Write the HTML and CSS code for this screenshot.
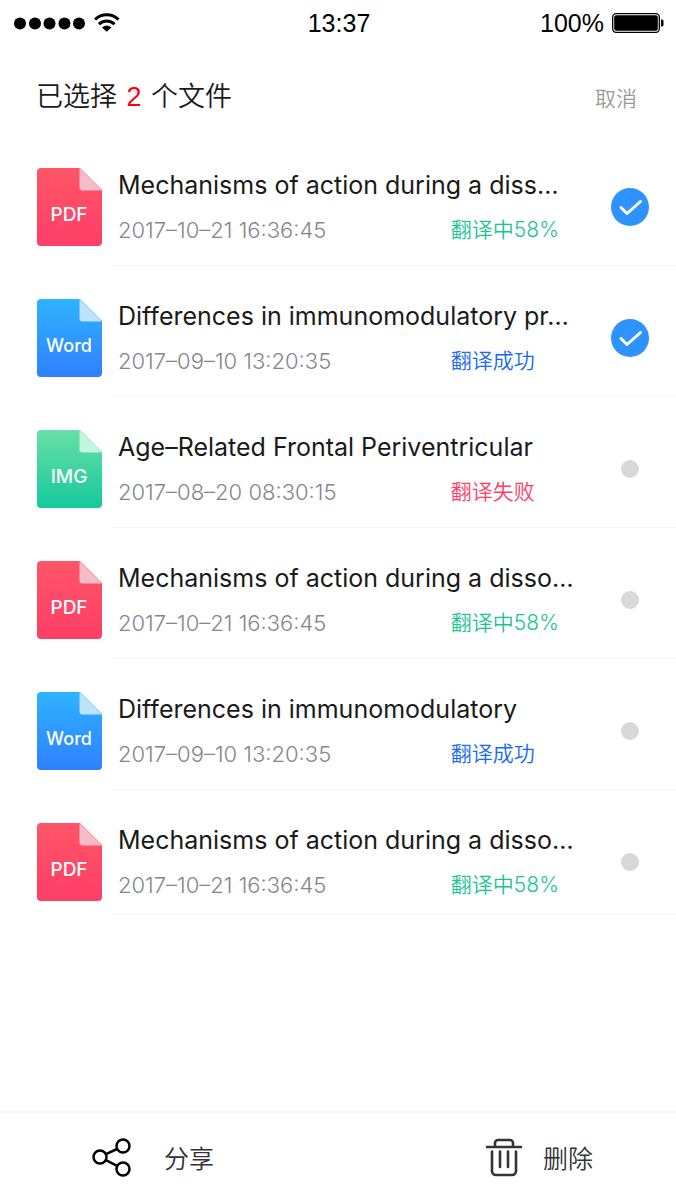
FILE: index.html
```html
<!DOCTYPE html>
<html lang="zh-CN">
<head>
  <meta charset="UTF-8">
  <meta name="viewport" content="width=device-width, initial-scale=1.0">
  <title>选择文件</title>
  <link rel="stylesheet" href="styles.css">
</head>
<body>

  <svg class="defs" width="0" height="0" aria-hidden="true">
    <defs>
      <linearGradient id="red" x1="0" y1="0" x2="0" y2="1">
        <stop offset="0" stop-color="#ff5567"/>
        <stop offset="1" stop-color="#ff3e68"/>
      </linearGradient>
      <linearGradient id="blue" x1="0" y1="0" x2="0" y2="1">
        <stop offset="0" stop-color="#2fb3ff"/>
        <stop offset="1" stop-color="#2f80ff"/>
      </linearGradient>
      <linearGradient id="green" x1="0" y1="0" x2="0" y2="1">
        <stop offset="0" stop-color="#68dfa6"/>
        <stop offset="1" stop-color="#16c99d"/>
      </linearGradient>
    </defs>
    <symbol id="page" viewBox="0 0 65 78">
      <path d="M4 0H43L65 22V74a4 4 0 0 1-4 4H4a4 4 0 0 1-4-4V4a4 4 0 0 1 4-4z"/>
    </symbol>
    <symbol id="fold" viewBox="0 0 65 78">
      <path d="M42.500 0L65 22.500H45.500a3 3 0 0 1-3-3z"/>
    </symbol>
    <symbol id="tick" viewBox="0 0 38 38">
      <path d="M10 19.500L16 25.500L29.500 13.500" fill="none" stroke="#fff" stroke-width="3" stroke-linecap="round" stroke-linejoin="round"/>
    </symbol>
  </svg>

  <div class="status-bar">
    <div class="signal">
      <svg width="106" height="20" viewBox="0 0 106 20" aria-hidden="true">
        <circle cx="6" cy="10.500" r="6"/>
        <circle cx="21" cy="10.500" r="6"/>
        <circle cx="35.500" cy="10.500" r="6"/>
        <circle cx="50.500" cy="10.500" r="6"/>
        <circle cx="65" cy="10.500" r="6"/>
        <g fill="none" stroke="#000" stroke-width="3">
          <path d="M81 6.500a17 17 0 0 1 23.500 0"/>
          <path d="M85 11.300a11 11 0 0 1 15.500 0"/>
        </g>
        <path d="M88 14.500a7.500 7.500 0 0 1 9.500 0L92.800 18.800z"/>
      </svg>
    </div>
    <div class="clock">13:37</div>
    <div class="battery">
      <span>100%</span>
      <svg width="52" height="20" viewBox="0 0 52 20" aria-hidden="true">
        <rect x="0.700" y="0.700" width="46.600" height="18.600" rx="3.500" fill="none" stroke="#000" stroke-width="1.300"/>
        <rect x="2.200" y="2.200" width="43.600" height="15.600" rx="2"/>
        <path d="M49 6.500h1a1.500 1.500 0 0 1 1.500 1.500v4a1.500 1.500 0 0 1-1.500 1.500h-1z"/>
      </svg>
    </div>
  </div>

  <header class="top">
    <h1>已选择 <b>2</b> 个文件</h1>
    <button type="button" class="cancel">取消</button>
  </header>

  <ul class="files">
    <li class="file">
      <svg class="icon" viewBox="0 0 65 78" aria-hidden="true">
        <use href="#page" fill="url(#red)"/>
        <use href="#fold" fill="#f4bcc7"/>
        <text x="32" y="53">PDF</text>
      </svg>
      <div class="body">
        <label class="info" for="f1">
          <span class="name">Mechanisms of action during a diss…</span>
          <span class="date">2017–10–21 16:36:45</span>
          <span class="state doing">翻译中58%</span>
        </label>
        <div class="pick">
          <input type="checkbox" id="f1" checked>
          <svg><use href="#tick"/></svg>
        </div>
      </div>
    </li>
    <li class="file">
      <svg class="icon" viewBox="0 0 65 78" aria-hidden="true">
        <use href="#page" fill="url(#blue)"/>
        <use href="#fold" fill="#bde3ff"/>
        <text class="small" x="32" y="53">Word</text>
      </svg>
      <div class="body">
        <label class="info" for="f2">
          <span class="name">Differences in immunomodulatory pr…</span>
          <span class="date">2017–09–10 13:20:35</span>
          <span class="state done">翻译成功</span>
        </label>
        <div class="pick">
          <input type="checkbox" id="f2" checked>
          <svg><use href="#tick"/></svg>
        </div>
      </div>
    </li>
    <li class="file">
      <svg class="icon" viewBox="0 0 65 78" aria-hidden="true">
        <use href="#page" fill="url(#green)"/>
        <use href="#fold" fill="#c3f5df"/>
        <text x="32" y="53">IMG</text>
      </svg>
      <div class="body">
        <label class="info" for="f3">
          <span class="name">Age–Related Frontal Periventricular</span>
          <span class="date">2017–08–20 08:30:15</span>
          <span class="state failed">翻译失败</span>
        </label>
        <div class="pick">
          <input type="checkbox" id="f3">
          <svg><use href="#tick"/></svg>
        </div>
      </div>
    </li>
    <li class="file">
      <svg class="icon" viewBox="0 0 65 78" aria-hidden="true">
        <use href="#page" fill="url(#red)"/>
        <use href="#fold" fill="#f4bcc7"/>
        <text x="32" y="53">PDF</text>
      </svg>
      <div class="body">
        <label class="info" for="f4">
          <span class="name">Mechanisms of action during a disso…</span>
          <span class="date">2017–10–21 16:36:45</span>
          <span class="state doing">翻译中58%</span>
        </label>
        <div class="pick">
          <input type="checkbox" id="f4">
          <svg><use href="#tick"/></svg>
        </div>
      </div>
    </li>
    <li class="file">
      <svg class="icon" viewBox="0 0 65 78" aria-hidden="true">
        <use href="#page" fill="url(#blue)"/>
        <use href="#fold" fill="#bde3ff"/>
        <text class="small" x="32" y="53">Word</text>
      </svg>
      <div class="body">
        <label class="info" for="f5">
          <span class="name">Differences in immunomodulatory</span>
          <span class="date">2017–09–10 13:20:35</span>
          <span class="state done">翻译成功</span>
        </label>
        <div class="pick">
          <input type="checkbox" id="f5">
          <svg><use href="#tick"/></svg>
        </div>
      </div>
    </li>
    <li class="file">
      <svg class="icon" viewBox="0 0 65 78" aria-hidden="true">
        <use href="#page" fill="url(#red)"/>
        <use href="#fold" fill="#f4bcc7"/>
        <text x="32" y="53">PDF</text>
      </svg>
      <div class="body">
        <label class="info" for="f6">
          <span class="name">Mechanisms of action during a disso…</span>
          <span class="date">2017–10–21 16:36:45</span>
          <span class="state doing">翻译中58%</span>
        </label>
        <div class="pick">
          <input type="checkbox" id="f6">
          <svg><use href="#tick"/></svg>
        </div>
      </div>
    </li>
  </ul>

  <footer class="actions">
    <button type="button" class="share">
      <svg width="40" height="40" viewBox="0 0 40 40" fill="none" stroke="#000" stroke-width="2.500" aria-hidden="true">
        <circle cx="8" cy="20" r="6.500"/>
        <circle cx="31" cy="9" r="6.500"/>
        <circle cx="31" cy="32" r="6.500"/>
        <path d="M14 17.200L25 12M14 23.200L25 28.800"/>
      </svg>
      分享
    </button>
    <button type="button" class="delete">
      <svg width="38" height="40" viewBox="0 0 38 40" fill="none" stroke="#333" stroke-width="2.600" stroke-linecap="round" stroke-linejoin="round" aria-hidden="true">
        <path d="M2 10H36M10 9V6a3 3 0 0 1 3-3H25a3 3 0 0 1 3 3V9"/>
        <path d="M7 14.500V34a4 4 0 0 0 4 4H27a4 4 0 0 0 4-4V14.500M15 14.500V30M23 14.500V30"/>
      </svg>
      删除
    </button>
  </footer>

</body>
</html>
```
FILE: styles.css
```css
* {
  box-sizing: border-box;
}
body {
  margin: 0;
  min-height: 100vh;
  display: flex;
  flex-direction: column;
  background-color: #fff;
  color: #1a1a1a;
  font-family: Inter, "Noto Sans CJK SC", sans-serif;
}
button {
  padding: 0;
  border: none;
  background: none;
  font-family: inherit;
  cursor: pointer;
}
svg {
  display: block;
}
.defs {
  position: absolute;
}

.status-bar {
  display: grid;
  grid-template-columns: 1fr auto 1fr;
  align-items: center;
  height: 46px;
  padding: 0 12px 0 14px;
  color: #000;
  font: 25px/30px "Liberation Sans", Arial, sans-serif;
}
.battery {
  display: flex;
  justify-content: flex-end;
  align-items: center;
  gap: 8px;
}

.top {
  display: flex;
  justify-content: space-between;
  align-items: center;
  height: 89px;
  padding: 12px 39px 0 36px;
}
.top h1 {
  margin: 0;
  font-size: 27px;
  line-height: 40px;
  font-weight: 350;
  font-family: "Liberation Sans", "Noto Sans CJK SC", sans-serif;
}
.top b {
  margin: 0 2px;
  color: #fe0012;
  font-weight: 400;
}
.cancel {
  color: #999;
  font-size: 21px;
  font-weight: 350;
}

.files {
  list-style: none;
  margin: 0;
  padding: 0;
}
.file {
  display: flex;
  align-items: flex-start;
  gap: 9px;
  padding: 33px 0 0 37px;
}
.icon {
  flex: none;
  width: 65px;
  height: 78px;
}
.icon text {
  fill: #fff;
  font-size: 19px;
  font-weight: 500;
  text-anchor: middle;
}
.icon .small {
  font-size: 18px;
}
.body {
  flex: 1;
  display: flex;
  align-items: center;
  padding: 0 0 19px 7px;
  border-bottom: 1px solid #f4f4f4;
}
.file:last-child .body {
  padding-bottom: 13px;
}
.info {
  flex: 1;
  display: grid;
  grid-template-columns: 5fr 2fr;
  row-gap: 12px;
}
.name {
  grid-column: 1 / 3;
  font-size: 25px;
  line-height: 34px;
  white-space: nowrap;
}
.date {
  color: #85868d;
  font-size: 22px;
  line-height: 32px;
  font-weight: 300;
}
.state {
  font-size: 21px;
  line-height: 32px;
  font-weight: 350;
}
.doing {
  color: #1cc492;
}
.done {
  color: #1768f2;
}
.failed {
  color: #ff3e66;
}

.pick {
  display: grid;
  place-items: center;
  width: 92px;
}
.pick input,
.pick svg {
  grid-area: 1 / 1;
}
.pick input {
  appearance: none;
  width: 18px;
  height: 18px;
  margin: 0;
  border-radius: 50%;
  background-color: #d8d8d8;
}
.pick input:checked {
  width: 38px;
  height: 38px;
  background-color: #2f93ff;
}
.pick svg {
  width: 38px;
  height: 38px;
  visibility: hidden;
  pointer-events: none;
}
.pick input:checked + svg {
  visibility: visible;
}

.actions {
  display: flex;
  justify-content: space-between;
  height: 91px;
  margin-top: auto;
  padding: 0 83px 2px 92px;
  border-top: 2px solid #f7f9f9;
}
.actions button {
  display: flex;
  align-items: center;
  color: #333;
  font-size: 25px;
  font-weight: 350;
}
.share {
  gap: 32px;
}
.delete {
  gap: 20px;
}
```
